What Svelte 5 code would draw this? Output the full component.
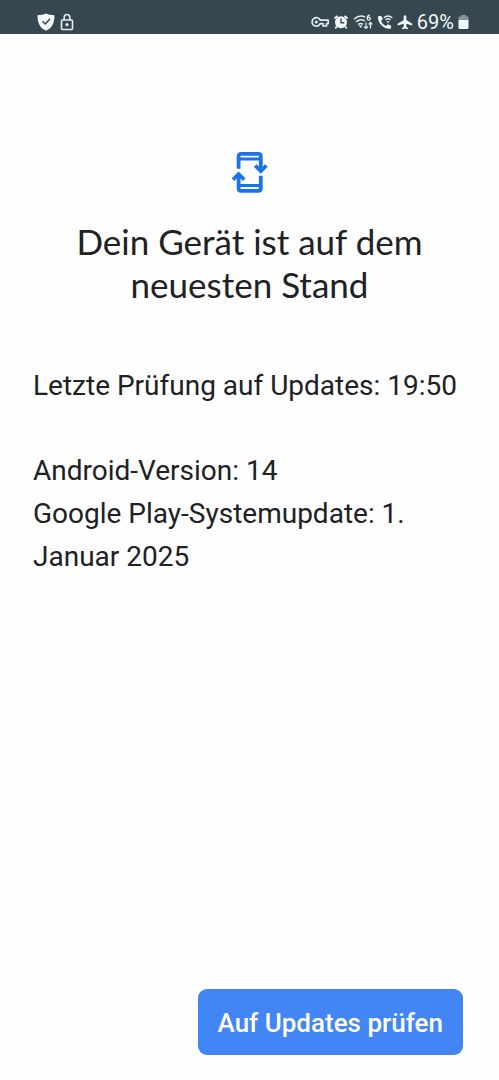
<script>
  const battery = 69;
  const lastCheck = "19:50";
  const androidVersion = "14";
  const playUpdate = "1. Januar 2025";
</script>

<div class="screen">
  <header class="status">
    <div class="left">
      <svg width="18" height="18" viewBox="0 0 18 18">
        <path d="M9 0.5C6.5 1.8 3.600 2.200 0.500 2.200C0.500 9 2.500 15 9 17.700C15.500 15 17.500 9 17.500 2.200C14.400 2.200 11.500 1.800 9 0.500Z" fill="#f4fafb" />
        <path d="M5.500 8.200L8.300 11L13 5.700" fill="none" stroke="#37474f" stroke-width="1.500" />
      </svg>
      <svg width="14" height="18" viewBox="0 0 14 18">
        <rect x="1.500" y="7" width="11" height="9.500" rx="1" fill="none" stroke="#e3edf0" stroke-width="1.600" />
        <path d="M4.200 7V4.300a2.800 2.800 0 0 1 5.600 0V7" fill="none" stroke="#e3edf0" stroke-width="1.600" />
        <circle cx="7" cy="11.700" r="1.600" fill="#e3edf0" />
      </svg>
    </div>
    <div class="right">
      <svg width="18" height="18" viewBox="0 0 18 18">
        <path d="M9.300 7.200H17.200V10.700H15.500V13H12V10.700H9.300A4.300 4.300 0 1 1 9.300 7.200Z" fill="none" stroke="#e3edf0" stroke-width="1.700" stroke-linejoin="round" />
        <circle cx="5.300" cy="9" r="1.600" fill="#e3edf0" />
      </svg>
      <svg width="16" height="18" viewBox="0 0 16 18">
        <path d="M1.500 5.500L4.500 2.800M14.500 5.500L11.500 2.800M3.800 13.500L2.300 15.500M12.200 13.500L13.700 15.500" stroke="#f4fafb" stroke-width="1.800" />
        <circle cx="8" cy="9.300" r="6" fill="#f4fafb" />
        <path d="M8 5.500V9.700H11.300" fill="none" stroke="#37474f" stroke-width="1.400" />
      </svg>
      <svg width="20" height="18" viewBox="0 0 20 18">
        <path d="M1 6.200Q6.500 1.200 12 4M3 9Q7.500 5 12 8M5.200 11.600Q7.500 9.400 10 11.300" fill="none" stroke="#e3edf0" stroke-width="1.500" />
        <path d="M5.700 12.500H9.500L7.600 15Z" fill="#e3edf0" />
        <path d="M16.800 2.200Q14.200 2.400 14.200 5.300" fill="none" stroke="#e3edf0" stroke-width="1.300" />
        <circle cx="15.800" cy="5.700" r="1.500" fill="none" stroke="#e3edf0" stroke-width="1.300" />
        <path d="M13 9.500V15.500M11 13.500L13 15.500L15 13.500M17.500 15.500V9.500M15.700 11.500L17.500 9.500L19.300 11.500" fill="none" stroke="#e3edf0" stroke-width="1.200" />
      </svg>
      <svg width="16" height="18" viewBox="0 0 16 18">
        <path d="M1 3.300L4.300 2.800L5.800 6.200L4 8C5 10.300 6.700 12 9 13L10.800 11.200L14.200 12.700L13.700 15.700C7.500 17 0 10 1 3.300Z" fill="#f4fafb" />
        <path d="M6.700 4.800Q11 1 15.300 4.800M8.500 7Q11 4.700 13.500 7" fill="none" stroke="#e3edf0" stroke-width="1.400" />
        <path d="M9.500 8.200H12.500L11 10.500Z" fill="#e3edf0" />
      </svg>
      <svg width="16" height="18" viewBox="0 0 16 18">
        <path d="M8 2.200C7.300 2.200 6.700 2.900 6.700 3.700V7L0.700 10.800V12.500L6.700 10.700V13.700L5 15V16.200L8 15.400L11 16.200V15L9.300 13.700V10.700L15.300 12.500V10.800L9.300 7V3.700C9.300 2.900 8.700 2.200 8 2.200Z" fill="#f4fafb" />
      </svg>
      <span class="percent">{battery}%</span>
      <svg width="11" height="18" viewBox="0 0 11 18">
        <path d="M3 2H8V3.500H9.500Q10.500 3.500 10.500 4.500V7.500H0.500V4.500Q0.500 3.500 1.500 3.500H3Z" fill="#87949a" />
        <path d="M0.500 7H10.500V14.500Q10.500 16 9 16H2Q0.500 16 0.500 14.500Z" fill="#f4fafb" />
      </svg>
    </div>
  </header>

  <main>
    <svg class="update" width="37" height="41" viewBox="0 0 37 41" fill="none" stroke="#1a73e8" stroke-width="3.800">
      <path d="M7.600 16.700V4.400Q7.600 1.900 10.100 1.900H27.300Q29.800 1.900 29.800 4.400V18.500" />
      <path d="M7.600 7H29.800" stroke-width="3" />
      <path d="M24.200 13.500L29.800 19L35.400 13.500" />
      <path d="M29.800 23.700V36.300Q29.800 38.800 27.300 38.800H10.100Q7.600 38.800 7.600 36.300V22.500" />
      <path d="M7.600 33.500H29.800" stroke-width="3" />
      <path d="M2 27.700L7.600 22.200L13.200 27.700" />
    </svg>
    <h1>Dein Gerät ist auf dem neuesten Stand</h1>
    <p>Letzte Prüfung auf Updates: {lastCheck}</p>
    <p>
      Android-Version: {androidVersion}<br />
      Google Play-Systemupdate: {playUpdate}
    </p>
  </main>

  <footer>
    <button type="button">Auf Updates prüfen</button>
  </footer>
</div>

<style>
  :global(body) {
    margin: 0;
    background: #fefefe;
  }

  .screen {
    display: flex;
    flex-direction: column;
    min-height: 100vh;
    color: #202124;
    font-family: Roboto, sans-serif;
  }

  .status {
    display: flex;
    justify-content: space-between;
    align-items: flex-end;
    box-sizing: border-box;
    height: 34px;
    padding: 0 30px 3px 37px;
    background: #37474f;
    color: #f4fafb;
  }

  .left,
  .right {
    display: flex;
    align-items: center;
    gap: 5px;
  }

  .right {
    gap: 4px;
  }

  .percent {
    font-size: 20px;
    line-height: 18px;
  }

  main {
    flex: 1;
    padding: 118px 33px 0;
  }

  .update {
    display: block;
    margin: 0 auto;
  }

  h1 {
    margin: 27px 0 58px;
    font-family: Lato, sans-serif;
    font-size: 35px;
    font-weight: 400;
    line-height: 43px;
    text-align: center;
  }

  p {
    margin: 0 0 42px;
    font-size: 28px;
    line-height: 43px;
  }

  footer {
    display: flex;
    justify-content: flex-end;
    padding: 24px 36px 25px;
  }

  button {
    height: 66px;
    padding: 2px 20px 0;
    border: none;
    border-radius: 9px;
    background: #4285f4;
    color: #fff;
    font: 500 26px Roboto, sans-serif;
  }
</style>
